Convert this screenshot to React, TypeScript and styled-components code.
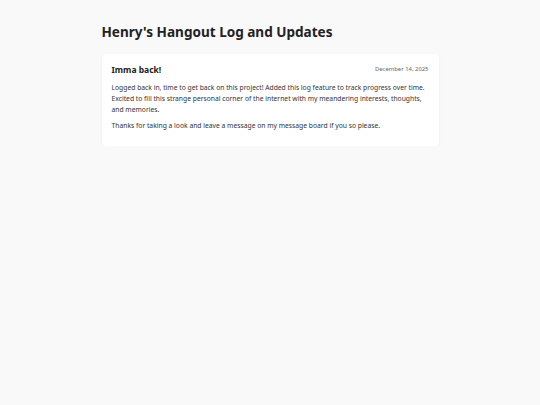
import styled, { createGlobalStyle } from "styled-components";

const GlobalStyle = createGlobalStyle`
  html, body {
    margin: 0;
    padding: 0;
    background: #f9f9f9;
    font-family: "Noto Sans", "Open Sans", sans-serif;
    color: #222;
  }
`;

const Page = styled.main`
  width: 337px;
  margin: 0 auto;
  padding-top: 23px;
`;

const Heading = styled.h1`
  margin: 0 0 13px;
  font-size: 13.55px;
  font-weight: 700;
  line-height: 18px;
  color: #222;
`;

const Card = styled.article`
  background: #fff;
  border-radius: 4px;
  box-shadow: 0 1px 3px rgba(0, 0, 0, 0.06);
  padding: 10px 10px 15px;
`;

const CardHeader = styled.header`
  display: flex;
  justify-content: space-between;
  align-items: center;
  height: 10px;
  margin-bottom: 7.5px;
`;

const PostTitle = styled.h2`
  margin: 0;
  font-size: 8.5px;
  font-weight: 700;
  color: #222;
`;

const PostDate = styled.time`
  font-size: 5.9px;
  color: #666;
`;

const Paragraph = styled.p`
  margin: 0 0 5px;
  font-size: 6.75px;
  line-height: 11px;
  color: #333;

  &:last-child {
    margin-bottom: 0;
  }
`;

const posts = [
  {
    title: "Imma back!",
    date: "December 14, 2025",
    body: [
      "Logged back in, time to get back on this project! Added this log feature to track progress over time. Excited to fill this strange personal corner of the internet with my meandering interests, thoughts, and memories.",
      "Thanks for taking a look and leave a message on my message board if you so please.",
    ],
  },
];

export default function App() {
  return (
    <>
      <GlobalStyle />
      <Page>
        <Heading>Henry's Hangout Log and Updates</Heading>
        {posts.map((post) => (
          <Card key={post.title}>
            <CardHeader>
              <PostTitle>{post.title}</PostTitle>
              <PostDate>{post.date}</PostDate>
            </CardHeader>
            {post.body.map((text, i) => (
              <Paragraph key={i}>{text}</Paragraph>
            ))}
          </Card>
        ))}
      </Page>
    </>
  );
}
